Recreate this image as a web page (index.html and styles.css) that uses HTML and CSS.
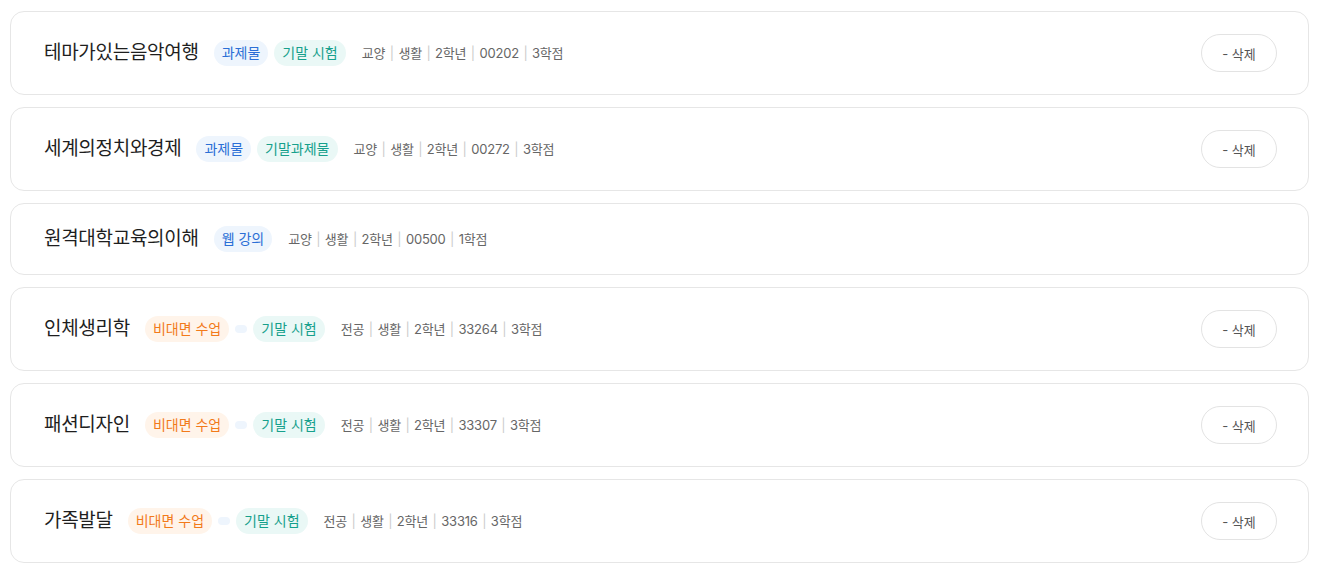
FILE: index.html
```html
<!DOCTYPE html>
<html lang="ko">
<head>
<meta charset="utf-8">
<link rel="stylesheet" href="styles.css">
</head>
<body>
<div class="list">
  <div class="card">
    <div class="info">
      <span class="title">테마가있는음악여행</span>
      <span class="tags"><span class="tag blue">과제물</span><span class="tag teal">기말 시험</span></span>
      <span class="meta">교양<i>|</i>생활<i>|</i>2학년<i>|</i>00202<i>|</i>3학점</span>
    </div>
    <button class="del">- 삭제</button>
  </div>
  <div class="card">
    <div class="info">
      <span class="title">세계의정치와경제</span>
      <span class="tags"><span class="tag blue">과제물</span><span class="tag teal">기말과제물</span></span>
      <span class="meta">교양<i>|</i>생활<i>|</i>2학년<i>|</i>00272<i>|</i>3학점</span>
    </div>
    <button class="del">- 삭제</button>
  </div>
  <div class="card">
    <div class="info">
      <span class="title">원격대학교육의이해</span>
      <span class="tags"><span class="tag blue">웹 강의</span></span>
      <span class="meta">교양<i>|</i>생활<i>|</i>2학년<i>|</i>00500<i>|</i>1학점</span>
    </div>
  </div>
  <div class="card">
    <div class="info">
      <span class="title">인체생리학</span>
      <span class="tags"><span class="tag orange">비대면 수업</span><span class="tag blue"></span><span class="tag teal">기말 시험</span></span>
      <span class="meta">전공<i>|</i>생활<i>|</i>2학년<i>|</i>33264<i>|</i>3학점</span>
    </div>
    <button class="del">- 삭제</button>
  </div>
  <div class="card">
    <div class="info">
      <span class="title">패션디자인</span>
      <span class="tags"><span class="tag orange">비대면 수업</span><span class="tag blue"></span><span class="tag teal">기말 시험</span></span>
      <span class="meta">전공<i>|</i>생활<i>|</i>2학년<i>|</i>33307<i>|</i>3학점</span>
    </div>
    <button class="del">- 삭제</button>
  </div>
  <div class="card">
    <div class="info">
      <span class="title">가족발달</span>
      <span class="tags"><span class="tag orange">비대면 수업</span><span class="tag blue"></span><span class="tag teal">기말 시험</span></span>
      <span class="meta">전공<i>|</i>생활<i>|</i>2학년<i>|</i>33316<i>|</i>3학점</span>
    </div>
    <button class="del">- 삭제</button>
  </div>
</div>
</body>
</html>
```

FILE: styles.css
```css
* { box-sizing: border-box; }
body {
  margin: 0;
  background: #ffffff;
  font-family: Inter, "Noto Sans CJK KR", sans-serif;
  color: #222;
}
.list {
  display: flex;
  flex-direction: column;
  gap: 12px;
  padding: 11px 8px 0 10px;
}
.card {
  display: flex;
  align-items: center;
  justify-content: space-between;
  border: 1px solid #e6e6e6;
  border-radius: 14px;
  padding: 22px 31px 22px 33px;
  min-height: 72px;
}
.info {
  display: flex;
  align-items: center;
}
.title {
  font-size: 19px;
  line-height: 24px;
  letter-spacing: -0.3px;
  color: #1e1e1e;
  margin-right: 15px;
}
.tags {
  display: flex;
  align-items: center;
  gap: 6px;
  margin-right: 16px;
}
.tag {
  display: inline-block;
  font-size: 14px;
  line-height: 18px;
  padding: 4px 8px;
  border-radius: 13px;
}
.tag:empty {
  width: 12px;
  height: 8px;
  padding: 0;
  border-radius: 4px;
}
.tag.blue { background: #eef5fd; color: #2b6fd6; }
.tag.teal { background: #eaf8f6; color: #16a08c; }
.tag.orange { background: #fff4ea; color: #f27a1a; }
.meta {
  font-size: 13px;
  line-height: 18px;
  color: #666;
  letter-spacing: -0.2px;
}
.meta i {
  font-style: normal;
  color: #ccc;
  margin: 0 4.5px;
}
.del {
  font-family: inherit;
  background: #fff;
  border: 1px solid #e3e3e3;
  border-radius: 19px;
  width: 76px;
  height: 38px;
  font-size: 13px;
  color: #555;
  cursor: pointer;
}
```
